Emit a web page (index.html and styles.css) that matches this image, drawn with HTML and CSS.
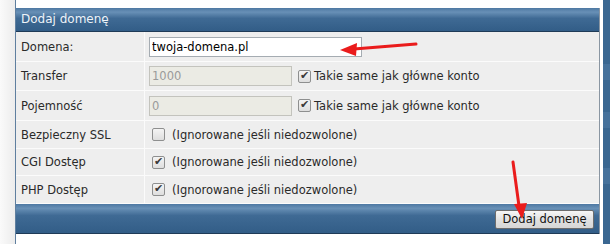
FILE: index.html
```html
<!DOCTYPE html>
<html lang="pl">
<head>
  <meta charset="UTF-8">
  <title>Dodaj domenę</title>
  <link rel="stylesheet" href="styles.css">
</head>
<body>
  <div class="page">
    <div class="gutter"></div>

    <div class="main">
      <div class="form">
        <div class="head">Dodaj domenę</div>

        <div class="label r1">Domena:</div>
        <div class="value r1"><input class="txt wide" type="text" value="twoja-domena.pl"></div>

        <div class="label r2">Transfer</div>
        <div class="value r2">
          <input class="txt short" type="text" value="1000" disabled>
          <input class="chk" type="checkbox" checked>
          <span>Takie same jak główne konto</span>
        </div>

        <div class="label r3">Pojemność</div>
        <div class="value r3">
          <input class="txt short" type="text" value="0" disabled>
          <input class="chk" type="checkbox" checked>
          <span>Takie same jak główne konto</span>
        </div>

        <div class="label r4">Bezpieczny SSL</div>
        <div class="value r4 opt">
          <input class="chk" type="checkbox">
          <span>(Ignorowane jeśli niedozwolone)</span>
        </div>

        <div class="label r5">CGI Dostęp</div>
        <div class="value r5 opt">
          <input class="chk" type="checkbox" checked>
          <span>(Ignorowane jeśli niedozwolone)</span>
        </div>

        <div class="label r6">PHP Dostęp</div>
        <div class="value r6 opt">
          <input class="chk" type="checkbox" checked>
          <span>(Ignorowane jeśli niedozwolone)</span>
        </div>

        <div class="foot"><button class="btn">Dodaj domenę</button></div>
      </div>
    </div>

    <div class="sidebar">
      <div class="seg s1"></div>
      <div class="seg s2"></div>
      <div class="seg s3"></div>
    </div>
  </div>

  <!-- czerwone strzałki z oryginalnego zrzutu -->
  <svg class="arrows" width="610" height="244" viewBox="0 0 610 244">
    <line x1="416" y1="44" x2="354" y2="49" stroke="#ea1c1c" stroke-width="3" stroke-linecap="round"/>
    <polygon points="340,50 357,43 356,56" fill="#ea1c1c"/>
    <line x1="513" y1="162" x2="519" y2="206" stroke="#ea1c1c" stroke-width="3" stroke-linecap="round"/>
    <polygon points="522,219 514,204 527,203" fill="#ea1c1c"/>
  </svg>
</body>
</html>
```

FILE: styles.css
```css
body {
  margin: 0;
  font-family: "DejaVu Sans", Verdana, sans-serif;
  font-size: 11.5px;
  color: #2a2a2a;
  background: #fff;
}
.page {
  display: flex;
  height: 244px;
  overflow: hidden;
}
.gutter {
  width: 15px;
  background: linear-gradient(to right, #fafafa, #ececec);
  border-right: 1px solid #5f7f9f;
}
.main {
  width: 584px;
  padding-top: 8px;
}
.form {
  display: grid;
  grid-template-columns: 129px 1fr;
  border-right: 1px solid #8a96a2;
}
.head {
  grid-column: 1 / 3;
  height: 23px;
  line-height: 23px;
  padding-left: 5px;
  color: #eef3f8;
  font-size: 12px;
  background: linear-gradient(to bottom, #4d78a2 0%, #6890b6 18%, #3f6a94 45%, #325d87 100%);
  border-bottom: 1px solid #1f3b57;
}
.label, .value {
  background: #eeeeee;
  border-bottom: 1px solid #fbfbfb;
  display: flex;
  align-items: center;
}
.label {
  padding-left: 5px;
  border-right: 1px solid #fbfbfb;
}
.value {
  padding-left: 4px;
}
.r1 { height: 29px; }
.r2 { height: 28px; }
.r3 { height: 29px; }
.r4 { height: 27px; }
.r5 { height: 26px; }
.r6 { height: 27px; }
.opt {
  padding-left: 7px;
}
.opt .chk {
  margin-right: 7px;
}
.txt {
  box-sizing: border-box;
  height: 20px;
  margin: 0;
  padding: 0 2px;
  font-family: "DejaVu Sans", Verdana, sans-serif;
  font-size: 11.5px;
  color: #000;
  background: #fff;
  border: 1px solid #a5acb2;
}
.txt:disabled {
  background: #ebebe4;
  color: #9a9a9a;
  border-color: #c3c3bd;
}
.wide { width: 213px; }
.short { width: 143px; margin-right: 6px; }
.chk {
  appearance: none;
  box-sizing: border-box;
  width: 13px;
  height: 13px;
  margin: 0 3px 0 0;
  border: 1px solid #8e8f8f;
  border-radius: 2px;
  background: linear-gradient(to bottom, #f4f4f4, #dedede);
  position: relative;
}
.chk:checked::after {
  content: "\2714";
  position: absolute;
  left: 1px;
  top: -2px;
  font-size: 11px;
  color: #3a3a3a;
}
.foot {
  grid-column: 1 / 3;
  height: 29px;
  display: flex;
  justify-content: flex-end;
  align-items: center;
  padding-right: 5px;
  background: linear-gradient(to bottom, #4d78a2 0%, #6890b6 15%, #3f6a94 40%, #325d87 100%);
  border-bottom: 1px solid #1f3b57;
}
.btn {
  box-sizing: border-box;
  width: 99px;
  height: 19px;
  padding: 0;
  margin-top: 1px;
  font-family: "DejaVu Sans", Verdana, sans-serif;
  font-size: 11.5px;
  color: #111;
  background: linear-gradient(to bottom, #f6f6f6, #e2e2e2 50%, #d6d6d6);
  border: 1px solid #6d6d6d;
  border-radius: 2px;
}
.sidebar {
  width: 7px;
  margin-left: 3px;
  background: #3a6791;
  display: flex;
  flex-direction: column;
}
.seg {
  background: #46729c;
  height: 16px;
}
.s1 { margin-top: 64px; }
.s2 { margin-top: 32px; }
.s3 { margin-top: 40px; }
.arrows {
  position: absolute;
  left: 0;
  top: 0;
}
```
